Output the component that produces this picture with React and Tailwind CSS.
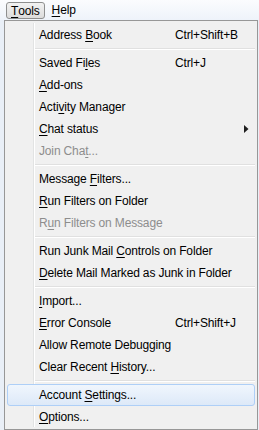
import React from "react";

const U = ({ children }) => <span className="underline underline-offset-[2px] decoration-1">{children}</span>;

const items = [
  { t: <>Address <U>B</U>ook</>, k: "Ctrl+Shift+B" },
  "sep",
  { t: <>Saved Fi<U>l</U>es</>, k: "Ctrl+J" },
  { t: <><U>A</U>dd-ons</> },
  { t: <>Acti<U>v</U>ity Manager</> },
  { t: <><U>C</U>hat status</>, sub: true },
  { t: <>Join Cha<U>t</U>...</>, disabled: true },
  "sep",
  { t: <>Message <U>F</U>ilters...</> },
  { t: <><U>R</U>un Filters on Folder</> },
  { t: <>R<U>u</U>n Filters on Message</>, disabled: true },
  "sep",
  { t: <>Run Junk Mail <U>C</U>ontrols on Folder</> },
  { t: <><U>D</U>elete Mail Marked as Junk in Folder</> },
  "sep",
  { t: <><U>I</U>mport...</> },
  { t: <><U>E</U>rror Console</>, k: "Ctrl+Shift+J" },
  { t: <>Allow Remote Debugging</> },
  { t: <>Clear Recent <U>H</U>istory...</> },
  "sep",
  { t: <>Account <U>S</U>ettings...</>, hl: true },
  { t: <><U>O</U>ptions...</> },
];

export default function App() {
  return (
    <div
      className="w-[259px] h-[430px] overflow-hidden bg-[#e9eff7] text-[12px] text-black tracking-[-0.15px]"
      style={{ fontFamily: '"Segoe UI", "Liberation Sans", Arial, sans-serif' }}
    >
      <div className="h-[20px] flex items-center bg-gradient-to-b from-[#fbfcfe] to-[#eef3fa] pl-[6px]">
        <div className="h-[17px] mt-[1px] px-[4px] flex items-center border border-[#8e8f8f] rounded-[3px] bg-gradient-to-b from-[#f2f2f2] to-[#dcdcdc] leading-none">
          <U>T</U>ools
        </div>
        <div className="ml-[7px] leading-none">
          <U>H</U>elp
        </div>
      </div>
      <div className="ml-[4px] w-[254px] h-[410px] border border-[#979797] bg-[#f0f0f0] relative py-[3px]">
        <div className="absolute left-[28px] top-[2px] bottom-[2px] w-[1px] bg-[#e2e3e3]" />
        <div className="absolute left-[29px] top-[2px] bottom-[2px] w-[1px] bg-white" />
        {items.map((it, i) =>
          it === "sep" ? (
            <div key={i} className="h-[6px] pl-[30px] pr-[2px] flex flex-col justify-center relative">
              <div className="h-[1px] bg-[#e0e0e0]" />
              <div className="h-[1px] bg-white" />
            </div>
          ) : (
            <div
              key={i}
              className={
                "relative h-[22px] flex items-center mx-[2px] " +
                (it.hl
                  ? "border border-[#aecff7] rounded-[3px] bg-gradient-to-b from-[#f0f6fd] to-[#dde9f8]"
                  : "border border-transparent")
              }
            >
              <div
                className={
                  "pl-[31px] flex-1 whitespace-nowrap " +
                  (it.disabled ? "text-[#8d8d8d]" : "text-black")
                }
              >
                {it.t}
              </div>
              {it.k && <div className="absolute left-[167px] whitespace-nowrap">{it.k}</div>}
              {it.sub && (
                <svg className="absolute left-[236px]" width="5" height="8" viewBox="0 0 5 8">
                  <path d="M0 0 L4.5 4 L0 8 Z" fill="#1e1e1e" />
                </svg>
              )}
            </div>
          )
        )}
      </div>
    </div>
  );
}
